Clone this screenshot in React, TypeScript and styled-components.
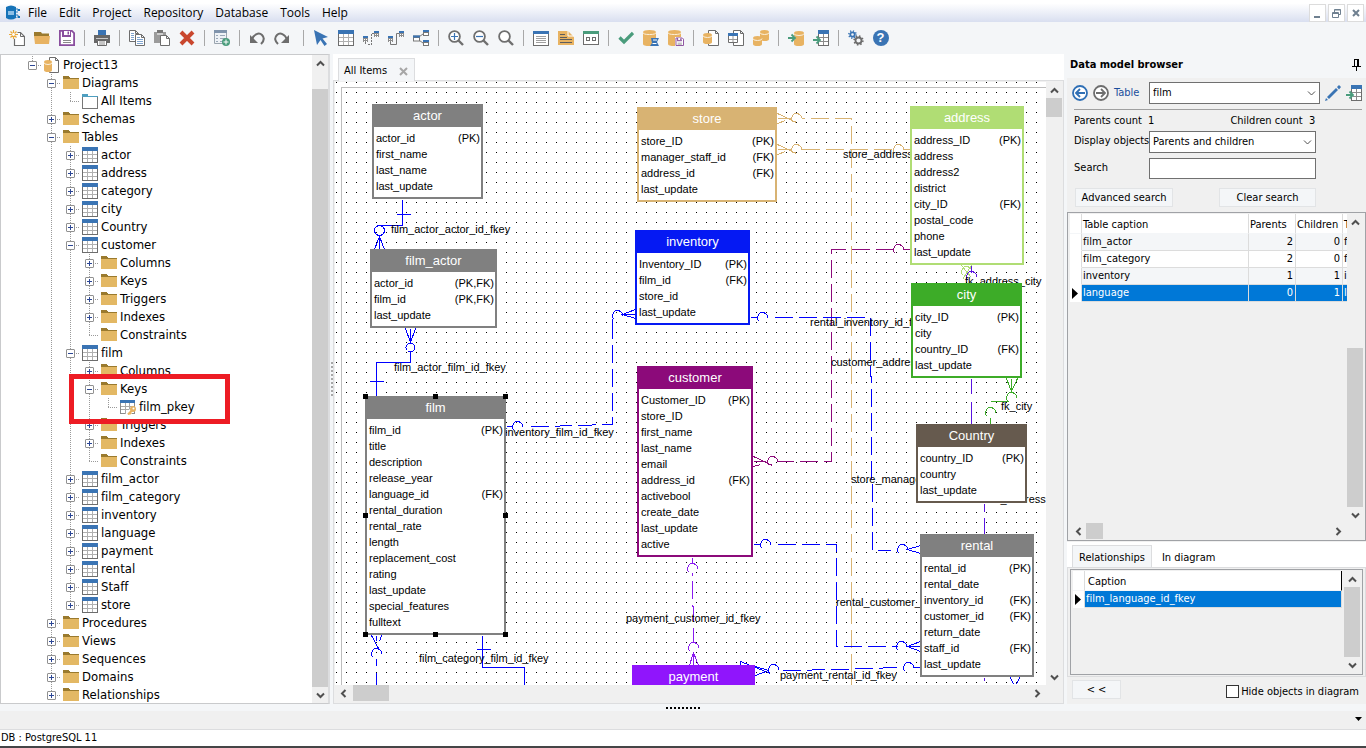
import React from "react";
import styled, { createGlobalStyle, css } from "styled-components";

const UI = `"DejaVu Sans Condensed", "DejaVu Sans", sans-serif`;
const MENU = `"Open Sans", "Noto Sans", sans-serif`;
const ARIAL = `"Liberation Sans", Arial, sans-serif`;

const GlobalStyle = createGlobalStyle`
  *, *::before, *::after { box-sizing: border-box; }
  html, body, #root { height: 100%; }
  body {
    margin: 0;
    overflow: hidden;
    background: #f4f6f8;
    color: #000;
    font: 11px/16px ${UI};
    font-variant-ligatures: none;
  }
  button, input, select { font: inherit; color: inherit; margin: 0; }
  ul { list-style: none; margin: 0; padding: 0; }
`;

const Window = styled.div`
  display: flex;
  flex-direction: column;
  height: 100vh;
`;

/* ---------- Menu bar ---------- */

const MenuBar = styled.header`
  display: flex;
  align-items: flex-end;
  height: 22px;
  padding: 0 2px 0 6px;
  background: linear-gradient(#fff 15%, #d9dff0);
`;
const MenuNav = styled.nav`
  display: flex;
  flex: 1;
  gap: 12px;
  margin-left: 8px;
`;
const MenuButton = styled.button`
  padding: 0;
  border: 0;
  background: none;
  font: 12px/18px ${MENU};
`;
const WindowButtons = styled.div`
  display: flex;
  gap: 2px;
`;
const WindowButton = styled.button`
  display: grid;
  place-items: center;
  width: 17px;
  height: 18px;
  padding: 0;
  border: 1px solid #dcdcdc;
  background: #fff;
`;

/* ---------- Toolbar ---------- */

const ToolBar = styled.div`
  display: flex;
  align-items: center;
  height: 32px;
  padding-left: 4px;
`;
const ToolGroup = styled.div`
  display: flex;
  align-items: center;
  margin-right: 4px;
`;
const ToolButton = styled.button`
  display: grid;
  place-items: center;
  width: 25px;
  height: 24px;
  padding: 0;
  border: 0;
  background: none;
`;
const Separator = styled.span`
  width: 10px;
  height: 16px;
  background: linear-gradient(#a8a8a8, #a8a8a8) 5px 0 / 1px 100% no-repeat;
`;

/* ---------- Scroll bars ---------- */

const Bar = styled.div<{ $horizontal?: boolean }>`
  display: flex;
  flex: none;
  background: #f0f0f0;
  ${(p) =>
    p.$horizontal
      ? css`height: 16px;`
      : css`flex-direction: column; width: 16px;`}
`;
const BarArrow = styled.button<{ $turn: number }>`
  display: grid;
  place-items: center;
  flex: none;
  width: 16px;
  height: 16px;
  padding: 0;
  border: 0;
  background: none;
  svg { transform: rotate(${(p) => p.$turn}deg); }
`;
const BarPart = styled.span<{ $grow: number; $thumb?: boolean }>`
  flex: ${(p) => p.$grow} 0 0;
  background: ${(p) => (p.$thumb ? "#cdcdcd" : "none")};
`;
const Chevron = ({ thin }: { thin?: boolean }) => (
  <svg width="9" height="7" viewBox="0 0 9 7" fill="none" stroke="#505050" strokeWidth={thin ? 1 : 2}>
    <path d="M1 5.5 4.5 2 8 5.5" />
  </svg>
);
function ScrollBar({ horizontal, parts, label }: { horizontal?: boolean; parts: [number, number, number]; label: string }) {
  return (
    <Bar $horizontal={horizontal}>
      <BarArrow $turn={horizontal ? -90 : 0} aria-label={`${label} back`}><Chevron /></BarArrow>
      <BarPart $grow={parts[0]} />
      <BarPart $grow={parts[1]} $thumb />
      <BarPart $grow={parts[2]} />
      <BarArrow $turn={horizontal ? 90 : 180} aria-label={`${label} forward`}><Chevron /></BarArrow>
    </Bar>
  );
}

/* ---------- Icons ---------- */

const Svg = ({ children, size = 16 }: { children: React.ReactNode; size?: number }) => (
  <svg width={size} height={size} viewBox="0 0 16 16" fill="none">{children}</svg>
);
const Cyl = ({ x = 0, y = 0, w = 10, h = 12 }: { x?: number; y?: number; w?: number; h?: number }) => (
  <g transform={`translate(${x} ${y})`}>
    <path d={`M0 2v${h - 3}q0 2 ${w / 2} 2t${w / 2}-2V2z`} fill="#e8b362" />
    <ellipse cx={w / 2} cy="2" rx={w / 2} ry="2" fill="#e8b362" />
    <path d={`M0 2.5q0 2 ${w / 2} 2t${w / 2}-2`} stroke="#fbf0dc" />
  </g>
);
const PageShape = ({ x = 0, y = 0, w = 10, h = 13 }: { x?: number; y?: number; w?: number; h?: number }) => (
  <path
    transform={`translate(${x} ${y})`}
    d={`M.5 .5h${w - 4}l3 3v${h - 4}h-${w - 1}zM${w - 3.5} .5v3h3`}
    fill="#fff"
    stroke="#6d6d6d"
  />
);
const MiniTable = ({ x = 0, y = 0 }: { x?: number; y?: number }) => (
  <g transform={`translate(${x} ${y})`} shapeRendering="crispEdges">
    <path d="M0 0h5v6H0z" fill="#8c8c8c" />
    <path d="M0 0h5v2H0z" fill="#3a74b4" />
    <path d="M1 3h1v1H1zm2 0h1v1H3zM1 5h1v1H1zm2 0h1v1H3z" fill="#fff" />
  </g>
);
const Floppy = () => (
  <>
    <path d="M.9.9h12l2.200 2.200v12H.9z" fill="#fff" stroke="#8a4f9e" strokeWidth="1.800" />
    <path d="M3 1h9v6H3z" fill="#8a4f9e" /><path d="M5 1h6v4H5z" fill="#fff" /><path d="M8.500 1.500h1.500v3H8.500z" fill="#8a4f9e" />
    <path d="M4 10h8v1H4zm0 2h8v1H4z" fill="#8a8a8a" />
  </>
);
const TableArt = () => (
  <g shapeRendering="crispEdges">
    <path d="M0 0h16v16H0z" fill="#6d6d6d" />
    <path d="M1 4h14v11H1z" fill="#fff" />
    <path d="M0 0h16v4H0z" fill="#3a74b4" />
    <path d="M5 4h1v11H5zM10 4h1v11h-1zM1 7h14v1H1zM1 11h14v1H1z" fill="#b0b0b0" />
  </g>
);
const FolderArt = () => (
  <g shapeRendering="crispEdges">
    <path d="M0 1h6l1 2h9v1H0z" fill="#9a7a2e" />
    <path d="M0 4h16v10H0z" fill="#e3b864" />
  </g>
);
const Lens = () => (
  <><circle cx="6.500" cy="6.500" r="5.400" stroke="#6f6f6f" strokeWidth="1.800" fill="#fff" /><path d="m10.500 10.500 4.500 4.500" stroke="#6f6f6f" strokeWidth="2.400" /></>
);
const ArrowRight = ({ y }: { y: number }) => (
  <path d={`M0 ${y}h6M3.500 ${y - 3.5}l3.500 3.500-3.500 3.500`} stroke="#4a9c7c" strokeWidth="1.800" />
);
const Gear = ({ x, y, r, color }: { x: number; y: number; r: number; color: string }) => (
  <g stroke={color}>
    <circle cx={x} cy={y} r={r} strokeWidth="1.800" />
    <circle cx={x} cy={y} r={r + 1.4} strokeWidth="1.600" strokeDasharray={`${r * 0.5} ${(2 * Math.PI * (r + 1.4)) / 8 - r * 0.5}`} />
  </g>
);
const DocTable = () => (
  <g shapeRendering="crispEdges">
    <path d="M5 0h11v16H5z" fill="#6d6d6d" /><path d="M6 4h9v11H6z" fill="#fff" /><path d="M5 0h11v4H5z" fill="#3a74b4" />
    <path d="M10 4h1v11h-1zM6 7h9v1H6zM6 11h9v1H6z" fill="#8c8c8c" />
  </g>
);

const icons: Record<string, React.ReactNode> = {
  new: (
    <>
      <path d="M6 2.500h5.500l4 4v9h-10V8" fill="#fff" stroke="#6d6d6d" strokeWidth="1.200" /><path d="M11.500 2.500v4h4" stroke="#6d6d6d" />
      <circle cx="4.500" cy="4.500" r="4.500" fill="#f4f6f8" />
      <path d="M4.500 0v9M0 4.500h9M1.500 1.500l6 6M7.500 1.500l-6 6" stroke="#eba93a" strokeWidth="1.200" /><circle cx="4.500" cy="4.500" r="1.400" fill="#fff" />
    </>
  ),
  open: <><path d="M0 2h7l1 1.500h7V6H0z" fill="#9a7a2e" /><path d="M0 6h16l-1 8H1z" fill="#e8b362" /></>,
  save: <Floppy />,
  print: (
    <>
      <path d="M4 0h8v5H4z" fill="#3a74b4" /><path d="M0 5h16v8H0z" fill="#686868" /><path d="M2 8h12v1H2z" fill="#c8c8c8" />
      <path d="M3.500 10.500h9v5h-9z" fill="#fff" stroke="#686868" /><path d="M5 12h6M5 14h6" stroke="#8c8c8c" />
    </>
  ),
  copy: (
    <>
      <PageShape w={10} h={12} /><path d="M2 3.500h3M2 5.500h3M2 7.500h3M2 9.500h3" stroke="#7fa4cf" />
      <PageShape x={6} y={4} w={10} h={12} /><path d="M8 7.500h3M8 9.500h6M8 11.500h6M8 13.500h6" stroke="#7fa4cf" />
    </>
  ),
  paste: (
    <><path d="M0 2h12v11H0z" fill="#9b9b9b" /><path d="M3 0h6v3H3z" fill="#777" /><path d="M3 4h6" stroke="#fff" /><PageShape x={6} y={5} w={10} h={11} /></>
  ),
  remove: <path d="m2 2 12 12M14 2 2 14" stroke="#c9472e" strokeWidth="4" />,
  addTable: (
    <>
      <path d="M.5.5h12v13H.5z" fill="#eef2f6" stroke="#9aa4ae" /><path d="M0 0h13v3H0z" fill="#8094ac" />
      <path d="M2 5.500h2M6 5.500h5M2 8.500h2M6 8.500h5M2 11.500h2M6 11.500h3" stroke="#9aa8b8" />
      <circle cx="12" cy="12" r="4" fill="#4a9c7c" /><path d="M12 9.500v5M9.500 12h5" stroke="#fff" />
    </>
  ),
  undo: <><path d="M3 9.500C5 4 10 2 13 5s2 6-1 9" stroke="#6d6d6d" strokeWidth="2" /><path d="M1 5v8h8z" fill="#6d6d6d" /></>,
  redo: <><path d="M13 9.500C11 4 6 2 3 5s-2 6 1 9" stroke="#6d6d6d" strokeWidth="2" /><path d="M15 5v8H7z" fill="#6d6d6d" /></>,
  cursor: <path d="m1 0 14 7-5.500 1.500L14 14l-2.500 2L7.500 10 4 15z" fill="#3a74b4" />,
  table: <TableArt />,
  relA: <><MiniTable y={6} /><MiniTable x={11} y={1} /><path d="M2.500 12v3M5 14.500h4M9 3.500h2M8.500 4v10" stroke="#777" strokeDasharray="2 1" /></>,
  relB: <><MiniTable y={6} /><MiniTable x={11} y={1} /><path d="M2.500 12v2.500h6v-11H11" stroke="#777" /></>,
  relC: (
    <>
      <path d="m3 9 7-5M3 8l7 5" stroke="#777" /><path d="M0 5.500h7v6H0zM10 0h6v6h-6zM10 10h6v6h-6z" fill="#777" />
      <path d="M1 8h5v2.500H1zM11 3h4v2h-4zM11 13h4v2h-4z" fill="#fff" /><path d="M0 5.500h7v2H0zM10 0h6v2h-6zM10 10h6v2h-6z" fill="#3a74b4" />
    </>
  ),
  zoomIn: <><Lens /><path d="M3 6.500h7M6.500 3v7" stroke="#3a74b4" strokeWidth="1.200" /></>,
  zoomOut: <><Lens /><path d="M3 6.500h7" stroke="#3a74b4" strokeWidth="1.200" /></>,
  zoom: <Lens />,
  form: (
    <g shapeRendering="crispEdges"><path d="M0 1h16v15H0z" fill="#6d6d6d" /><path d="M1 4h14v11H1z" fill="#fff" /><path d="M0 1h16v3H0z" fill="#3a74b4" /><path d="M3 6h10v1H3zm0 2h10v1H3zm0 2h10v1H3zm0 2h10v1H3z" fill="#a0a0a0" /></g>
  ),
  note: (
    <><path d="M0 1h10l6 6v8H0z" fill="#e8b362" /><path d="M10 1v5h6" stroke="#fff" /><path d="M2 4.500h5M2 7.500h7M2 9.500h12M2 12.500h12" stroke="#5d5d5d" /></>
  ),
  windowGreen: (
    <g shapeRendering="crispEdges"><path d="M0 1h16v14H0z" fill="#6d6d6d" /><path d="M1 4h14v10H1z" fill="#fff" /><path d="M0 1h16v3H0z" fill="#4a9c7c" /><path d="M3 7h4v4H3zM9 7h4v4H9z" fill="#6d6d6d" /><path d="M4 8h2v2H4zM10 8h2v2h-2z" fill="#fff" /></g>
  ),
  check: <path d="m1.500 7.500 4.500 4.500 9-9" stroke="#4a9c7c" strokeWidth="3.200" />,
  script: <><Cyl w={13} h={15} /><path d="M8 8h8l-2 4 2 4H7l2-3z" fill="#3a74b4" /><path d="M10 10h4M9.500 13.500h4" stroke="#fff" /></>,
  saveDb: <><Cyl w={13} h={15} /><path d="M7 7h9v9H7z" fill="#fff" /><g transform="translate(7.500 7.500) scale(.53)"><Floppy /></g></>,
  dbDoc: <><PageShape x={5} w={11} h={16} /><Cyl y={3} w={9} h={10} /></>,
  tableDoc: (
    <><PageShape x={5} w={11} h={16} /><path d="M.5 4.500h9v8h-9z" fill="#fff" stroke="#6d6d6d" /><path d="M0 3h10v3H0z" fill="#3a74b4" /><path d="M5 6v6M1 9.500h8" stroke="#999" /></>
  ),
  dbTwo: <><Cyl x={7} w={9} h={10} /><Cyl y={6} w={9} h={9} /></>,
  toDb: <><Cyl x={6} y={1} w={10} h={14} /><path d="M0 8h7" stroke="#f4f6f8" strokeWidth="4" /><ArrowRight y={8} /></>,
  toTable: <><DocTable /><path d="M0 10h7" stroke="#f4f6f8" strokeWidth="4" /><ArrowRight y={10} /></>,
  gears: <><Gear x={4.5} y={4.5} r={2.2} color="#3a74b4" /><Gear x={10.5} y={10.5} r={3} color="#6d6d6d" /></>,
  back: <><circle cx="8" cy="8" r="7" stroke="#2f6fb5" strokeWidth="1.800" fill="#fff" /><path d="M13 8H4M8 4 4 8l4 4" stroke="#2f6fb5" strokeWidth="1.800" /></>,
  forward: <><circle cx="8" cy="8" r="7" stroke="#6d6d6d" strokeWidth="1.800" fill="#fff" /><path d="M3 8h9M8 4l4 4-4 4" stroke="#6d6d6d" strokeWidth="1.800" /></>,
  pen: <><path d="m2 12 9-9 2 2-9 9z" fill="#3a74b4" /><path d="m12 2 2-2 2 2-2 2.500zM0 16l1-3 2 2z" fill="#3a74b4" /></>,
  folder: <FolderArt />,
  diagram: <g shapeRendering="crispEdges"><path d="M0 3h16v13H0z" fill="#777" /><path d="M1 4h14v11H1z" fill="#fff" /><path d="M0 1h6v2h10v1H0z" fill="#4f9fc0" /></g>,
  project: <><PageShape x={5} w={10} h={16} /><Cyl y={3} w={8} h={11} /></>,
  key: (
    <>
      <g shapeRendering="crispEdges"><path d="M0 1h15v14H0z" fill="#8c8c8c" /><path d="M1 4h13v10H1z" fill="#fff" /><path d="M0 1h15v3H0z" fill="#3a74b4" /><path d="M5 4h1v10H5zM9 4h1v10H9zM1 7h13v1H1zM1 10h13v1H1z" fill="#a8a8a8" /></g>
      <path d="m7 16 6-6" stroke="#fff" strokeWidth="4.500" />
      <path d="m8 15.500 4-4M9 13l2 2" stroke="#e8b362" strokeWidth="2.200" /><circle cx="13" cy="10" r="3" fill="#e8b362" /><circle cx="13.500" cy="9.500" r="1" fill="#fff" />
    </>
  ),
};
const HelpBadge = styled.span`
  display: grid;
  place-items: center;
  width: 16px;
  height: 16px;
  border-radius: 50%;
  background: #3a74b4;
  color: #fff;
  font: bold 13px/16px ${ARIAL};
`;

const firstTools = [["new", "open", "save"], ["print"], ["copy", "paste", "remove"], ["addTable"], ["undo", "redo"]];
const moreTools = [
  ["cursor", "table", "relA", "relB", "relC"],
  ["zoomIn", "zoomOut", "zoom"],
  ["form", "note", "windowGreen"],
  ["check", "script", "saveDb"],
  ["dbDoc", "tableDoc", "dbTwo"],
  ["toDb", "toTable"],
  ["gears", "help"],
];
const Tools = ({ names }: { names: string[] }) => (
  <>
    {names.map((n) => (
      <ToolButton key={n} aria-label={n}>{n === "help" ? <HelpBadge>?</HelpBadge> : <Svg>{icons[n]}</Svg>}</ToolButton>
    ))}
  </>
);

/* ---------- Project tree ---------- */

const Workspace = styled.main`
  display: flex;
  flex: 1;
  min-height: 0;
`;
const TreePanel = styled.aside`
  display: flex;
  flex: none;
  width: 330px;
  border: 1px solid #c9cacc;
  border-right: 2px solid #dcdddf;
  background: #fff;
`;
const TreeBody = styled.ul`
  flex: 1;
  overflow: hidden;
  padding: 1px 0 0 22px;
`;
const TreeItem = styled.li<{ $marked?: boolean }>`
  ${(p) =>
    p.$marked &&
    css`
      position: relative;
      &::after {
        content: "";
        position: absolute;
        z-index: 1;
        left: 46px;
        top: -6px;
        bottom: -8px;
        width: 161px;
        border: 5px solid #ed1c24;
      }
    `}
`;
const TreeRow = styled.div`
  display: flex;
  align-items: center;
  height: 18px;
  font-size: 13px;
  white-space: nowrap;
`;
const Guide = styled.span<{ $line?: "full" | "half" | "none"; $branch?: boolean }>`
  position: relative;
  display: grid;
  place-items: center;
  flex: none;
  width: 19px;
  height: 18px;
  --v: repeating-linear-gradient(#9a9a9a 0 1px, transparent 1px 2px);
  --h: repeating-linear-gradient(90deg, #9a9a9a 0 1px, transparent 1px 2px);
  background-image: ${(p) => (p.$line === "none" ? "none" : "var(--v)")}${(p) => (p.$branch ? ", var(--h)" : "")};
  background-repeat: no-repeat;
  background-position: 9px 0, 9px 9px;
  background-size: 1px ${(p) => (p.$line === "half" ? "9px" : "100%")}, 10px 1px;
`;
const Expander = styled.button`
  display: grid;
  place-items: center;
  width: 9px;
  height: 9px;
  padding: 0;
  border: 1px solid #919191;
  border-radius: 1px;
  background: #fff;
`;
const TreeIcon = styled.span`
  display: grid;
  width: 16px;
  margin: 0 3px 0 2px;
`;

interface TreeNode {
  name: string;
  icon: string;
  open?: boolean;
  marked?: boolean;
  children?: TreeNode[];
}
const folder = (name: string, children?: TreeNode[], extra?: Partial<TreeNode>): TreeNode => ({ name, icon: "folder", children, ...extra });
const table = (name: string, children: TreeNode[] = [], open = false): TreeNode => ({ name, icon: "table", children, open });

const tree: TreeNode[] = [
  {
    name: "Project13",
    icon: "project",
    open: true,
    children: [
      folder("Diagrams", [{ name: "All Items", icon: "diagram" }], { open: true }),
      folder("Schemas", []),
      folder(
        "Tables",
        [
          table("actor"), table("address"), table("category"), table("city"), table("Country"),
          table("customer", [folder("Columns", []), folder("Keys", []), folder("Triggers", []), folder("Indexes", []), folder("Constraints")], true),
          table(
            "film",
            [
              folder("Columns", []),
              folder("Keys", [{ name: "film_pkey", icon: "key" }], { open: true, marked: true }),
              folder("Triggers", []), folder("Indexes", []), folder("Constraints"),
            ],
            true
          ),
          table("film_actor"), table("film_category"), table("inventory"), table("language"),
          table("payment"), table("rental"), table("Staff"), table("store"),
        ],
        { open: true }
      ),
      folder("Procedures", []), folder("Views", []), folder("Sequences", []), folder("Domains", []), folder("Relationships", []),
    ],
  },
];

function Branch({ nodes, trail }: { nodes: TreeNode[]; trail: boolean[] }) {
  return (
    <>
      {nodes.map((n, i) => {
        const last = i === nodes.length - 1;
        return (
          <TreeItem key={n.name} $marked={n.marked}>
            <TreeRow>
              {trail.map((on, k) => <Guide key={k} $line={on ? "full" : "none"} />)}
              <Guide $line={last ? "half" : "full"} $branch>
                {n.children && (
                  <Expander aria-label={`${n.open ? "Collapse" : "Expand"} ${n.name}`}>
                    <svg width="5" height="5" viewBox="0 0 5 5" shapeRendering="crispEdges" fill="#2c4795">
                      <path d="M0 2h5v1H0z" />{!n.open && <path d="M2 0h1v5H2z" />}
                    </svg>
                  </Expander>
                )}
              </Guide>
              <TreeIcon><Svg>{icons[n.icon]}</Svg></TreeIcon>
              {n.name}
            </TreeRow>
            {n.open && n.children && <ul><Branch nodes={n.children} trail={[...trail, !last]} /></ul>}
          </TreeItem>
        );
      })}
    </>
  );
}

/* ---------- Diagram ---------- */

const Splitter = styled.div`
  display: grid;
  place-items: center;
  flex: none;
  width: 3px;
  &::after {
    content: "";
    width: 2px;
    height: 35px;
    background: repeating-linear-gradient(#a8a8a8 0 2px, transparent 2px 4px);
  }
`;
const DiagramPanel = styled.section`
  display: flex;
  flex: 1;
  flex-direction: column;
  min-width: 0;
  background: #fff;
`;
const DiagramTabs = styled.div`
  display: flex;
  align-items: flex-end;
  height: 27px;
  padding-left: 5px;
  border-bottom: 1px solid #dcdddf;
`;
const DiagramTab = styled.div`
  display: flex;
  align-items: center;
  gap: 12px;
  height: 23px;
  padding: 2px 6px 0 5px;
  margin-bottom: -1px;
  border: 1px solid #dcdddf;
  border-bottom: 0;
  background: #f4f6f8;
`;
const CloseButton = styled.button`
  display: grid;
  padding: 0;
  border: 0;
  background: none;
`;
const DiagramFrame = styled.div`
  display: flex;
  flex: 1;
  flex-direction: column;
  min-height: 0;
  padding: 1px 1px 2px;
  border: 1px solid #dcdddf;
  border-top: 0;
  background: #f0f0f0;
`;
const DiagramRow = styled.div`
  display: flex;
  flex: 1;
  min-height: 0;
`;
const HScrollRow = styled.div`
  padding-right: 17px;
`;
/* Diagram coordinates of the visible top left corner. */
const VIEW = { x: 335, y: 82 };
const Canvas = styled.div`
  position: relative;
  flex: 1;
  overflow: hidden;
  background:
    linear-gradient(#bdbdbd, #bdbdbd) 6px 5px / 100% 1px no-repeat,
    linear-gradient(#bdbdbd, #bdbdbd) 6px 5px / 1px 100% no-repeat,
    conic-gradient(from 270deg at 1px 1px, #000 90deg, transparent 0) 1px 0 / 10px 10px #fff;
  font: 11px/16px ${ARIAL};
`;
const Links = styled.svg`
  position: absolute;
  left: 0;
  top: 0;
`;
const Placed = styled.div<{ $x: number; $y: number }>`
  position: absolute;
  left: ${(p) => p.$x - VIEW.x}px;
  top: ${(p) => p.$y - VIEW.y}px;
  white-space: nowrap;
`;
const Entity = styled(Placed)<{ $w: number; $color: string }>`
  width: ${(p) => p.$w}px;
  border: 2px solid ${(p) => p.$color};
  border-top: 0;
  background: #fff;
`;
const EntityTitle = styled.h2<{ $color: string }>`
  margin: 0 -2px;
  background: ${(p) => p.$color};
  color: #fff;
  font: 13px/23px ${ARIAL};
  text-align: center;
`;
const Columns = styled.ul`
  padding: 3px 1px 3px 2px;
`;
const Column = styled.li`
  display: flex;
  justify-content: space-between;
`;
const Handle = styled(Placed)`
  width: 5px;
  height: 5px;
  background: #000;
`;

interface EntityData { name: string; x: number; y: number; w: number; color: string; cols: string[] }
const entities: EntityData[] = [
  { name: "actor", x: 372, y: 104, w: 111, color: "#808080", cols: ["actor_id|PK", "first_name", "last_name", "last_update"] },
  { name: "film_actor", x: 370, y: 249, w: 127, color: "#808080", cols: ["actor_id|PK,FK", "film_id|PK,FK", "last_update"] },
  {
    name: "film", x: 365, y: 396, w: 141, color: "#808080",
    cols: ["film_id|PK", "title", "description", "release_year", "language_id|FK", "rental_duration", "rental_rate", "length", "replacement_cost", "rating", "last_update", "special_features", "fulltext"],
  },
  { name: "store", x: 637, y: 107, w: 140, color: "#d8b373", cols: ["store_ID|PK", "manager_staff_id|FK", "address_id|FK", "last_update"] },
  { name: "inventory", x: 635, y: 230, w: 115, color: "#0519f3", cols: ["Inventory_ID|PK", "film_id|FK", "store_id", "last_update"] },
  {
    name: "customer", x: 637, y: 366, w: 116, color: "#8c0a7a",
    cols: ["Customer_ID|PK", "store_ID", "first_name", "last_name", "email", "address_id|FK", "activebool", "create_date", "last_update", "active"],
  },
  { name: "address", x: 910, y: 106, w: 114, color: "#b0dd74", cols: ["address_ID|PK", "address", "address2", "district", "city_ID|FK", "postal_code", "phone", "last_update"] },
  { name: "city", x: 911, y: 283, w: 111, color: "#3dac28", cols: ["city_ID|PK", "city", "country_ID|FK", "last_update"] },
  { name: "Country", x: 916, y: 424, w: 111, color: "#665a4e", cols: ["country_ID|PK", "country", "last_update"] },
  { name: "rental", x: 920, y: 534, w: 114, color: "#808080", cols: ["rental_id|PK", "rental_date", "inventory_id|FK", "customer_id|FK", "return_date", "staff_id|FK", "last_update"] },
  { name: "payment", x: 632, y: 665, w: 123, color: "#9015fc", cols: [] },
];
const linkLabels: [string, number, number][] = [
  ["film_actor_actor_id_fkey", 391, 221],
  ["film_actor_film_id_fkey", 394, 359],
  ["inventory_film_id_fkey", 505, 424],
  ["film_category_film_id_fkey", 419, 650],
  ["store_address", 843, 146],
  ["rental_inventory_id_f", 810, 314],
  ["customer_addres", 831, 354],
  ["fk_address_city", 965, 273],
  ["fk_city", 1001, 398],
  ["store_manage", 851, 471],
  ["staff_address", 980, 491],
  ["rental_customer_", 836, 594],
  ["payment_customer_id_fkey", 626, 610],
  ["payment_rental_id_fkey", 780, 667],
];
const handles = [365, 435, 505].flatMap((x) => [396, 515, 634].map((y) => [x, y])).filter(([x, y]) => !(x === 435 && y === 515));

const ring = (x: number, y: number) => `M${x - 3} ${y + 4}A5 5 0 1 1 ${x + 5} ${y}`;
const BLUE = "#0000ff";
const PURPLE = "#8c0a7a";
const VIOLET = "#8a1af0";
const TAN = "#d8b373";
const GREEN = "#3dac28";
const LIME = "#b0dd74";
interface Link { color: string; solid?: string; dashed?: string }
const links: Link[] = [
  { color: BLUE, solid: "M402 199V225H379M396 214H410M379 236V249M379 236L374 249M379 236L384 249M374 230a5 5 0 1 0 10 0a5 5 0 1 0-10 0M369 264h2" },
  { color: BLUE, solid: "M410 328V342M405 328L410 342L415 328M405.500 347a4.500 4.500 0 1 0 9 0a4.500 4.500 0 1 0-9 0M410 352V362H376V396M369 381H383" },
  { color: BLUE, solid: `M506 426H512${ring(517, 426)}M612 318V328${ring(617, 315)}M635 309L622 314L635 318M622 314H635`, dashed: "M530 426L548 426L572 425L612 424V328" },
  { color: BLUE, solid: `M371 635L378 648M376 635V640M381 635L379 641${ring(376, 653)}M376 658V665M376 672V684M482 635V667H524V684M476 649H490` },
  { color: TAN, solid: `M777 113L796 122M777 118H790M777 123L785 120${ring(796, 118)}M801 118H804`, dashed: "M810 118H851V684" },
  { color: TAN, solid: `M777 144L796 153M777 149H790M777 154L785 151${ring(796, 149)}${ring(898, 149)}M903 149H910`, dashed: "M801 149H892" },
  { color: PURPLE, solid: `M910 249H903${ring(898, 249)}${ring(772, 461)}M753 456L772 465M753 461H765M753 466L760 464`, dashed: "M893 249H831V461H777" },
  { color: BLUE, solid: `M750 317H757${ring(762, 317)}${ring(902, 549)}M920 545L907 549L920 553`, dashed: "M774 317H870V376H871V480H872V550H890" },
  { color: BLUE, solid: `M753 544H760${ring(765, 544)}${ring(901, 646)}M920 641L907 646L920 651M907 646H920`, dashed: "M777 544H836V646H897" },
  { color: BLUE, solid: `M740 666V661L770 673M755 666L768 670M755 675L768 670${ring(773, 669)}${ring(908, 667)}M913 667H920`, dashed: "M783 670L840 669L897 667" },
  { color: VIOLET, solid: `M692 557V563${ring(692, 568)}M692 572V575${ring(693, 647)}M693 652V665M693 652L689 665M693 652L698 665`, dashed: "M692 580V606H693V642" },
  { color: LIME, solid: `${ring(966, 271)}M961 265L971 277M971 265L962 279` },
  { color: "#5a14e0", solid: `M971 265V272${ring(971, 276)}M971 378V393M971 401V424M984 503V511M984 517V534M984 677V680` },
  { color: GREEN, solid: `M1006 378L1011 391L1017 378M1011 378V391${ring(1011, 397)}M990 401H1008${ring(990, 412)}M990 417V424` },
  { color: BLUE, solid: "M1010 677L1013 684M1019 677L1016 684" },
];

/* ---------- Data model browser ---------- */

const Browser = styled.aside`
  display: flex;
  flex: none;
  flex-direction: column;
  width: 299px;
  margin-left: 3px;
  background: #f0f0f0;
`;
const BrowserTitle = styled.div`
  display: flex;
  align-items: center;
  justify-content: space-between;
  height: 24px;
  padding: 0 5px 2px 3px;
  background: #f4f6f8;
  h1 { margin: 0; font: bold 11px/16px ${UI}; }
`;
const PickerRow = styled.div`
  display: flex;
  align-items: center;
  gap: 5px;
  padding: 4px 4px 0 5px;
`;
const IconButton = styled.button`
  display: grid;
  padding: 0;
  border: 0;
  background: none;
`;
const TableLink = styled.a`
  width: 30px;
  color: #1a4e9c;
  text-decoration: none;
`;
const SelectBox = styled.span<{ $wide?: boolean }>`
  position: relative;
  display: block;
  flex: ${(p) => (p.$wide ? "1" : "none")};
  select {
    width: 100%;
    height: 22px;
    padding: 0 3px;
    border: 1px solid #707070;
    border-radius: 0;
    background: #fff;
    appearance: none;
  }
  svg {
    position: absolute;
    right: 4px;
    top: 8px;
    transform: rotate(180deg);
    pointer-events: none;
  }
`;
const Counts = styled.div`
  display: flex;
  gap: 76px;
  margin: 5px 4px 0 7px;
  padding-top: 3px;
  border-top: 1px solid #a0a0a0;
  span { white-space: pre; }
`;
const Form = styled.form`
  display: grid;
  grid-template-columns: 75px 167px;
  row-gap: 5px;
  padding: 2px 0 5px 7px;
  label { line-height: 20px; white-space: nowrap; }
  input { width: 100%; height: 21px; border: 1px solid #707070; background: #fff; }
`;
const ButtonRow = styled.div`
  display: flex;
  justify-content: space-between;
  grid-column: 1 / -1;
  margin: 4px 0 0 1px;
`;
const FlatButton = styled.button<{ $w: number }>`
  width: ${(p) => p.$w}px;
  height: 19px;
  padding: 0;
  border: 1px solid #e2e4e6;
  background: #f4f6f8;
  line-height: 17px;
`;
const GridBox = styled.div<{ $fixed?: boolean }>`
  display: flex;
  flex-direction: column;
  flex: ${(p) => (p.$fixed ? "none" : "1")};
  height: ${(p) => (p.$fixed ? "106px" : "auto")};
  min-height: 0;
  padding: 1px 2px;
  border: 1px solid #a0a2a6;
`;
const GridArea = styled.div`
  display: flex;
  flex: 1;
  min-height: 0;
`;
const GridClip = styled.div`
  flex: 1;
  min-width: 0;
  overflow: hidden;
`;
const DataTable = styled.table<{ $w: string }>`
  width: ${(p) => p.$w};
  table-layout: fixed;
  border-collapse: separate;
  border-spacing: 0;
  line-height: 16px;
  th, td {
    height: 17px;
    padding: 0 1px;
    border-right: 1px solid #dcdcdc;
    border-bottom: 1px solid #dcdcdc;
    overflow: hidden;
    font-weight: normal;
    text-align: left;
    white-space: nowrap;
  }
  th { height: 20px; padding-top: 2px; background: #fff; border-bottom-color: #f4f6f8; }
`;
const DataRow = styled.tr<{ $state?: "odd" | "selected" }>`
  td {
    background: ${(p) => (p.$state === "selected" ? "#0078d7" : p.$state === "odd" ? "#f4f6f8" : "#fff")};
    color: ${(p) => (p.$state === "selected" ? "#fff" : "#000")};
  }
  td:first-child { background: #fff; border-bottom-color: #fff; color: #000; }
`;
const NumberCell = styled.td`
  && { padding-right: 2px; text-align: right; }
`;
const Marker = () => (
  <svg width="6" height="11" viewBox="0 0 6 11" display="block"><path d="M0 0 6 5.500 0 11z" fill="#000" /></svg>
);
const MarkerCell = styled.td`
  && { padding-left: 2px; }
`;
const SubTabs = styled.div`
  display: flex;
  align-items: flex-end;
  height: 26px;
  margin-top: 1px;
  padding-left: 5px;
  background: #fff;
  border-bottom: 1px solid #dcdddf;
`;
const SubTab = styled.button<{ $active?: boolean }>`
  height: 22px;
  padding: 3px ${(p) => (p.$active ? 6 : 9)}px 0;
  border: 1px solid ${(p) => (p.$active ? "#dcdddf" : "transparent")};
  border-bottom: 0;
  background: ${(p) => (p.$active ? "#f4f6f8" : "none")};
`;
const SubFrame = styled.div`
  padding: 1px 2px;
  border: 1px solid #dcdddf;
  border-top: 0;
`;
const CaptionCell = styled.th`
  && { padding-left: 3px; border-right-color: #000; }
`;
const BrowserFooter = styled.div`
  display: flex;
  align-items: center;
  justify-content: space-between;
  height: 27px;
  padding: 0 7px 2px 5px;
  label { display: flex; align-items: center; gap: 2px; padding-top: 4px; }
  input { width: 13px; height: 13px; border: 1px solid #333; background: #fff; appearance: none; }
`;

/* ---------- Bottom ---------- */

const Grip = styled.div`
  display: grid;
  place-items: center;
  height: 7px;
  &::after {
    content: "";
    width: 35px;
    height: 2px;
    background: repeating-linear-gradient(90deg, #000 0 2px, transparent 2px 4px);
  }
`;
const OutputBar = styled.div`
  display: flex;
  align-items: center;
  justify-content: flex-end;
  height: 19px;
  padding: 0 4px 3px 0;
  border-bottom: 1px solid #dcdddf;
  background: #f0f0f0;
`;
const StatusBar = styled.footer`
  height: 18px;
  padding-left: 1px;
  border-bottom: 2px solid #454547;
  background: #fff;
`;

const rows: [string, number, number][] = [["film_actor", 2, 0], ["film_category", 2, 0], ["inventory", 1, 1], ["language", 0, 1]];

export default function App() {
  return (
    <Window>
      <GlobalStyle />
      <MenuBar>
        <svg width="14" height="18" viewBox="0 0 14 18">
          <path d="M11 4v10M8 6h5M8 12h5" stroke="#2b7bb9" strokeDasharray="2 1" fill="none" />
          <path d="M0 3q5-3 10 0v11q-5 3-10 0z" fill="#1673b8" /><path d="M2 7h6v4H2z" fill="#8ec0e6" />
          <path d="M12 5h2v2h-2zM12 12h2v2h-2z" fill="#1673b8" />
        </svg>
        <MenuNav>
          {["File", "Edit", "Project", "Repository", "Database", "Tools", "Help"].map((m) => <MenuButton key={m}>{m}</MenuButton>)}
        </MenuNav>
        <WindowButtons>
          <WindowButton aria-label="Minimize"><svg width="9" height="9"><path d="M1 7h6v2H1z" fill="#6f8090" /></svg></WindowButton>
          <WindowButton aria-label="Restore">
            <svg width="9" height="9" fill="none" stroke="#6f8090"><path d="M2.500 3V.5h6v5H7M2.500 1h6M.5 3.500h6v5h-6zM.5 4.500h6" /></svg>
          </WindowButton>
          <WindowButton aria-label="Close"><svg width="8" height="8"><path d="m1 1 6 6M7 1 1 7" stroke="#6f8090" strokeWidth="2" /></svg></WindowButton>
        </WindowButtons>
      </MenuBar>

      <ToolBar>
        <ToolGroup>
          {firstTools.map((g, i) => <React.Fragment key={i}>{i > 0 && <Separator />}<Tools names={g} /></React.Fragment>)}
        </ToolGroup>
        <ToolGroup>
          {moreTools.map((g, i) => <React.Fragment key={i}><Separator /><Tools names={g} /></React.Fragment>)}
        </ToolGroup>
      </ToolBar>

      <Workspace>
        <TreePanel>
          <TreeBody><Branch nodes={tree} trail={[]} /></TreeBody>
          <ScrollBar label="Scroll tree" parts={[18, 600, 0]} />
        </TreePanel>
        <Splitter />

        <DiagramPanel>
          <DiagramTabs>
            <DiagramTab>
              All Items
              <CloseButton aria-label="Close tab"><svg width="9" height="9"><path d="m1 1 7 7M8 1 1 8" stroke="#a6a6a6" strokeWidth="2" /></svg></CloseButton>
            </DiagramTab>
          </DiagramTabs>
          <DiagramFrame>
            <DiagramRow>
              <Canvas>
                <Links width="100%" height="100%" fill="none" shapeRendering="crispEdges">
                  <g transform={`translate(${0.5 - VIEW.x} ${0.5 - VIEW.y})`}>
                    {links.map((l, i) => (
                      <g key={i} stroke={l.color}>
                        {l.solid && <path d={l.solid} />}
                        {l.dashed && <path d={l.dashed} strokeDasharray="18 6" />}
                      </g>
                    ))}
                  </g>
                </Links>
                {linkLabels.map(([text, x, y]) => <Placed key={text} $x={x} $y={y}>{text}</Placed>)}
                {entities.map((e) => (
                  <Entity key={e.name} $x={e.x} $y={e.y} $w={e.w} $color={e.color}>
                    <EntityTitle $color={e.color}>{e.name}</EntityTitle>
                    <Columns>
                      {e.cols.map((c) => {
                        const [name, key] = c.split("|");
                        return <Column key={c}><span>{name}</span>{key && <span>({key})</span>}</Column>;
                      })}
                    </Columns>
                  </Entity>
                ))}
                {handles.map(([x, y]) => <Handle key={`${x}-${y}`} $x={x - 2} $y={y - 2} />)}
              </Canvas>
              <ScrollBar label="Scroll diagram vertically" parts={[0, 19, 549]} />
            </DiagramRow>
            <HScrollRow><ScrollBar horizontal label="Scroll diagram horizontally" parts={[2, 36, 640]} /></HScrollRow>
          </DiagramFrame>
        </DiagramPanel>

        <Browser>
          <BrowserTitle>
            <h1>Data model browser</h1>
            <svg width="9" height="12" viewBox="0 0 9 12" fill="none" stroke="#000" shapeRendering="crispEdges"><path d="M2.500 7V.5h4V7M5.500 1v6M0 7.500h9M4.500 8v4" /></svg>
          </BrowserTitle>
          <PickerRow>
            <IconButton aria-label="Back"><Svg>{icons.back}</Svg></IconButton>
            <IconButton aria-label="Forward"><Svg>{icons.forward}</Svg></IconButton>
            <TableLink href="#table">Table</TableLink>
            <SelectBox $wide>
              <select aria-label="Table"><option>film</option></select>
              <Chevron thin />
            </SelectBox>
            <IconButton aria-label="Edit table"><Svg>{icons.pen}</Svg></IconButton>
            <IconButton aria-label="Go to table"><Svg>{icons.toTable}</Svg></IconButton>
          </PickerRow>
          <Counts><span>{"Parents count  1"}</span><span>{"Children count  3"}</span></Counts>
          <Form onSubmit={(e) => e.preventDefault()}>
            <label htmlFor="display">Display objects</label>
            <SelectBox>
              <select id="display"><option>Parents and children</option></select>
              <Chevron thin />
            </SelectBox>
            <label htmlFor="search">Search</label>
            <input id="search" type="text" />
            <ButtonRow>
              <FlatButton $w={98} type="button">Advanced search</FlatButton>
              <FlatButton $w={97} type="button">Clear search</FlatButton>
            </ButtonRow>
          </Form>
          <GridBox>
            <GridArea>
              <GridClip>
                <DataTable $w="340px">
                  <colgroup><col width="12" /><col width="167" /><col width="47" /><col width="47" /><col width="67" /></colgroup>
                  <thead><tr><th /><th>Table caption</th><th>Parents</th><th>Children</th><th>Table name</th></tr></thead>
                  <tbody>
                    {rows.map(([name, parents, children], i) => (
                      <DataRow key={name} $state={i === 3 ? "selected" : i % 2 ? undefined : "odd"}>
                        <MarkerCell>{i === 3 && <Marker />}</MarkerCell>
                        <td>{name}</td>
                        <NumberCell>{parents}</NumberCell>
                        <NumberCell>{children}</NumberCell>
                        <td>{name}</td>
                      </DataRow>
                    ))}
                  </tbody>
                </DataTable>
              </GridClip>
              <ScrollBar label="Scroll tables" parts={[116, 157, 0]} />
            </GridArea>
            <HScrollRow><ScrollBar horizontal label="Scroll columns" parts={[0, 17, 230]} /></HScrollRow>
          </GridBox>
          <SubTabs>
            <SubTab $active>Relationships</SubTab>
            <SubTab>In diagram</SubTab>
          </SubTabs>
          <SubFrame>
            <GridBox $fixed>
              <GridArea>
                <GridClip>
                  <DataTable $w="269px">
                    <colgroup><col width="12" /><col /></colgroup>
                    <thead><tr><th /><CaptionCell>Caption</CaptionCell></tr></thead>
                    <tbody><DataRow $state="selected"><MarkerCell><Marker /></MarkerCell><td>film_language_id_fkey</td></DataRow></tbody>
                  </DataTable>
                </GridClip>
                <ScrollBar label="Scroll relationships" parts={[0, 68, 0]} />
              </GridArea>
            </GridBox>
          </SubFrame>
          <BrowserFooter>
            <FlatButton $w={49}>&lt; &lt;</FlatButton>
            <label><input type="checkbox" />Hide objects in diagram</label>
          </BrowserFooter>
        </Browser>
      </Workspace>

      <Grip />
      <OutputBar><svg width="7" height="4"><path d="M0 0h7L3.500 4z" fill="#000" /></svg></OutputBar>
      <StatusBar>DB : PostgreSQL 11</StatusBar>
    </Window>
  );
}
